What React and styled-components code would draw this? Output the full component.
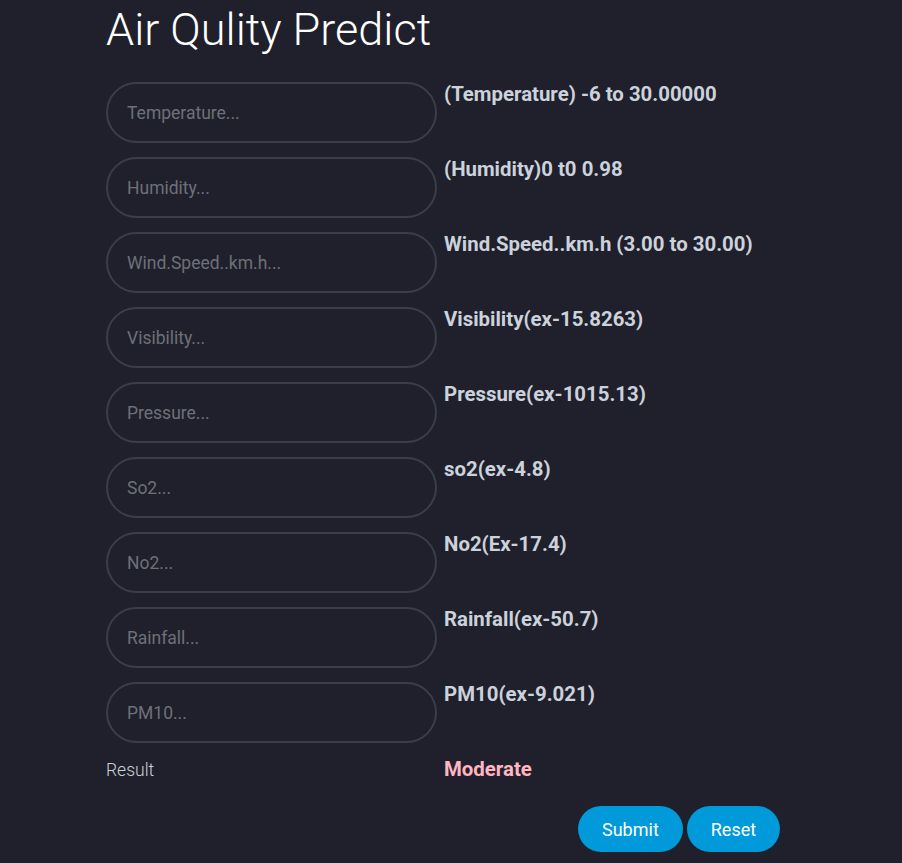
import React from "react";
import styled, { createGlobalStyle } from "styled-components";

const fields = [
  { ph: "Temperature...", hint: "(Temperature) -6 to 30.00000" },
  { ph: "Humidity...", hint: "(Humidity)0 t0 0.98" },
  { ph: "Wind.Speed..km.h...", hint: "Wind.Speed..km.h (3.00 to 30.00)" },
  { ph: "Visibility...", hint: "Visibility(ex-15.8263)" },
  { ph: "Pressure...", hint: "Pressure(ex-1015.13)" },
  { ph: "So2...", hint: "so2(ex-4.8)" },
  { ph: "No2...", hint: "No2(Ex-17.4)" },
  { ph: "Rainfall...", hint: "Rainfall(ex-50.7)" },
  { ph: "PM10...", hint: "PM10(ex-9.021)" },
];

const App = () => {
  return (
    <>
      <GlobalStyle />
      <Page>
        <Title>Air Qulity Predict</Title>
        <Form onSubmit={(e) => e.preventDefault()}>
          {fields.map((f) => (
            <Row key={f.ph}>
              <Input type="text" placeholder={f.ph} />
              <Hint>{f.hint}</Hint>
            </Row>
          ))}
          <ResultRow>
            <ResultLabel>Result</ResultLabel>
            <ResultValue>Moderate</ResultValue>
          </ResultRow>
          <Actions>
            <Button type="submit">Submit</Button>
            <Button type="reset">Reset</Button>
          </Actions>
        </Form>
      </Page>
    </>
  );
};

const GlobalStyle = createGlobalStyle`
  html, body {
    margin: 0;
    background: #1f202b;
    font-family: Roboto, "Liberation Sans", sans-serif;
  }
`;

const Page = styled.div`
  min-height: 863px;
  box-sizing: border-box;
  padding: 0 0 0 106px;
  background: #1f202b;
`;

const Title = styled.h1`
  margin: 0;
  padding-top: 4px;
  font-size: 45px;
  font-weight: 300;
  line-height: 52px;
  color: #ffffff;
`;

const Form = styled.form`
  display: flex;
  flex-direction: column;
  gap: 14px;
  margin-top: 26px;
`;

const Row = styled.div`
  display: flex;
  align-items: flex-start;
  gap: 7px;
`;

const Input = styled.input`
  box-sizing: border-box;
  width: 331px;
  height: 61px;
  padding: 0 19px;
  border: 2px solid #3b3d49;
  border-radius: 31px;
  background: #1f202b;
  color: #ccd2dc;
  font-family: Roboto, "Liberation Sans", sans-serif;
  font-size: 17.5px;
  outline: none;

  &::placeholder {
    color: #6e7079;
  }
`;

const Hint = styled.span`
  padding-top: 1px;
  font-size: 20.4px;
  font-weight: 700;
  line-height: 22px;
  color: #ccd2dc;
`;

const ResultRow = styled.div`
  display: flex;
  align-items: baseline;
`;

const ResultLabel = styled.span`
  width: 338px;
  font-size: 17.5px;
  font-weight: 300;
  color: #ccd2dc;
`;

const ResultValue = styled.span`
  font-size: 20.4px;
  font-weight: 700;
  color: #ffb6c1;
`;

const Actions = styled.div`
  display: flex;
  gap: 4px;
  margin: 11px 0 0 472px;
`;

const Button = styled.button`
  height: 46px;
  padding: 0 24px;
  border: none;
  border-radius: 23px;
  background: #0099d9;
  color: #ffffff;
  font-family: Roboto, "Liberation Sans", sans-serif;
  font-size: 18px;
  cursor: pointer;
`;

export default App;
